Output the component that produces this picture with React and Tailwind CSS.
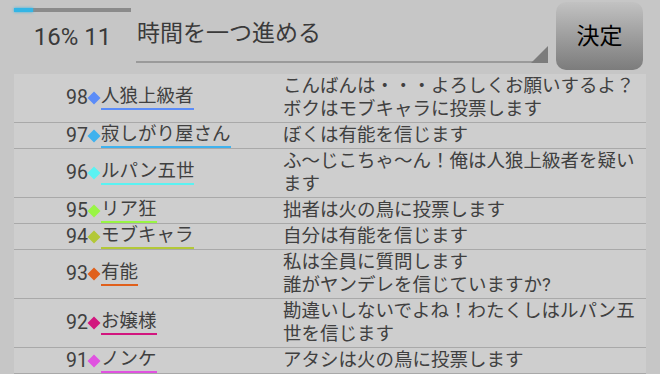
import React from 'react';

const rows = [
  { no: 98, name: '人狼上級者', color: '#5b8cf8', lines: ['こんばんは・・・よろしくお願いするよ？', 'ボクはモブキャラに投票します'] },
  { no: 97, name: '寂しがり屋さん', color: '#3fb2ee', lines: ['ぼくは有能を信じます'] },
  { no: 96, name: 'ルパン五世', color: '#5af2f2', lines: ['ふ～じこちゃ～ん！俺は人狼上級者を疑い', 'ます'] },
  { no: 95, name: 'リア狂', color: '#99f545', lines: ['拙者は火の鳥に投票します'] },
  { no: 94, name: 'モブキャラ', color: '#b3c838', lines: ['自分は有能を信じます'] },
  { no: 93, name: '有能', color: '#e0601c', lines: ['私は全員に質問します', '誰がヤンデレを信じていますか?'] },
  { no: 92, name: 'お嬢様', color: '#d2167e', lines: ['勘違いしないでよね！わたくしはルパン五', '世を信じます'] },
  { no: 91, name: 'ノンケ', color: '#e052e0', lines: ['アタシは火の鳥に投票します'] },
];

function Diamond({ color }) {
  return (
    <svg width="14" height="14" viewBox="0 0 14 14" className="shrink-0">
      <polygon points="7,0.5 13.5,7 7,13.5 0.5,7" fill={color} />
    </svg>
  );
}

export default function App() {
  return (
    <div
      className="w-[660px] h-[374px] bg-[#c6c6c6] overflow-hidden text-[#404040]"
      style={{ fontFamily: 'Roboto, "Noto Sans CJK JP", sans-serif' }}
    >
      {/* Header */}
      <div className="flex h-[74px] pl-[14px]">
        <div className="w-[117px] flex flex-col pt-[8px]">
          <div className="h-[4px] bg-[#8b8b8b]">
            <div className="h-full w-[19px] bg-[#33b5e5] shadow-[0_0_3px_#33b5e5]" />
          </div>
          <div className="text-center text-[24px] leading-[28px] mt-[11px] text-[#3a3a3a]">16% 11</div>
        </div>

        <div className="ml-[5px] w-[412px] relative">
          <div className="pt-[19px] pl-[1px] text-[23px] leading-[30px] text-[#3a3a3a]">時間を一つ進める</div>
          <div className="absolute left-0 right-0 top-[61px] h-[2px] bg-[#9a9a9a]" />
          <svg width="17" height="17" viewBox="0 0 17 17" className="absolute right-0 top-[46px]">
            <polygon points="17,0 17,17 0,17" fill="#7c7c7c" />
          </svg>
        </div>

        <button className="ml-[8px] mt-[2px] w-[87px] h-[68px] rounded-[10px] bg-gradient-to-b from-[#c2c2c2] to-[#7c7c7c] text-black text-[23px] leading-none flex items-center justify-center">
          決定
        </button>
      </div>

      {/* Log table */}
      <div className="mx-[14px] bg-[#cecece]">
        {rows.map((r) => (
          <div key={r.no} className="flex border-b border-[#a9a9a9] text-[18.5px]">
            <div className="w-[269px] pl-[52px] flex items-center">
              <span className="w-[21px] text-[19.5px] leading-[20px] whitespace-nowrap">{r.no}</span>
              <Diamond color={r.color} />
              <span
                className="leading-[21px] pb-[1px] border-b-2 whitespace-nowrap"
                style={{ borderColor: r.color }}
              >
                {r.name}
              </span>
            </div>
            <div className="flex-1 py-[1px] leading-[23px] whitespace-nowrap">
              {r.lines.map((l, i) => (
                <div key={i}>{l}</div>
              ))}
            </div>
          </div>
        ))}
      </div>
    </div>
  );
}
